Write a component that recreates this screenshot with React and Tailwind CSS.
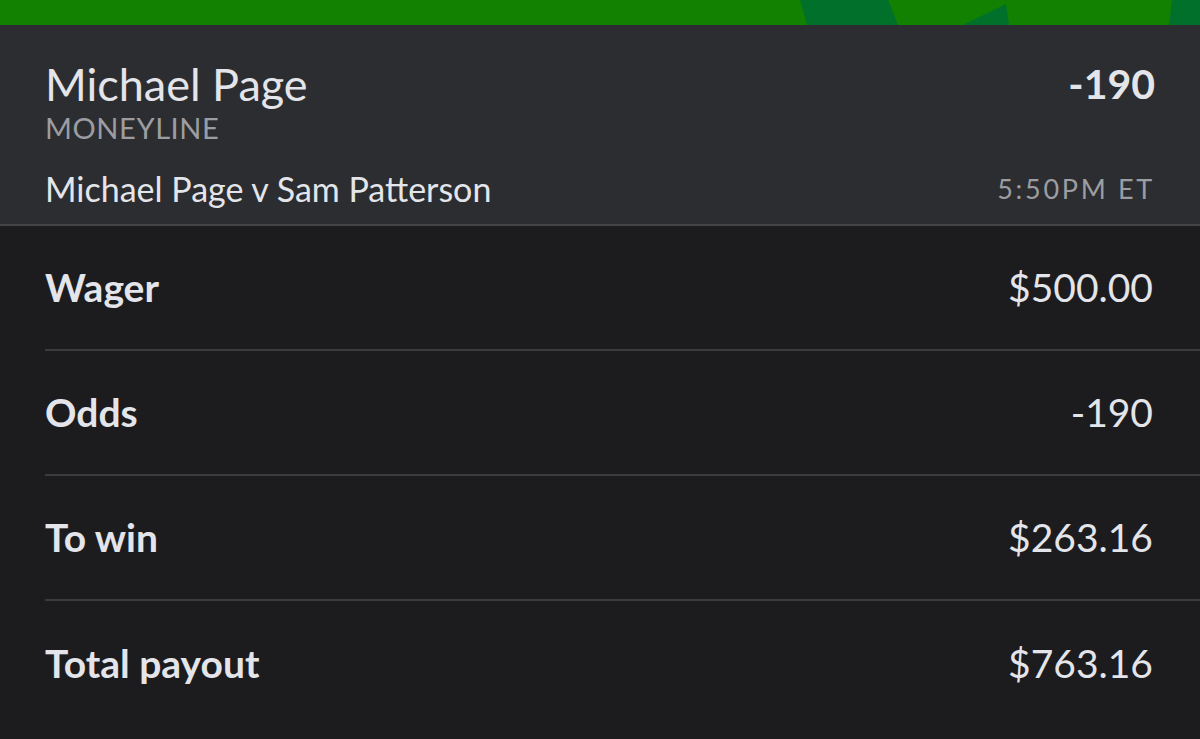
const ROWS = [
  { label: 'Wager', value: '$500.00' },
  { label: 'Odds', value: '-190' },
  { label: 'To win', value: '$263.16' },
  { label: 'Total payout', value: '$763.16' },
]

export default function App() {
  return (
    <div className="w-[1200px] h-[739px] overflow-hidden bg-[#1c1c1e] font-['Lato',sans-serif] text-[#e4e5ea]">
      {/* Green top band */}
      <div className="h-[25px] bg-[#128000]">
        <svg width="1200" height="25" viewBox="0 0 1200 25" className="block">
          <polygon points="800,0 888,0 898,25 807,25" fill="#00702b" />
          <polygon points="963,25 1006,4 1009,25" fill="#00702b" />
          <polygon points="1172,0 1200,0 1200,25 1169,25" fill="#00702b" />
        </svg>
      </div>

      {/* Selection header */}
      <div className="bg-[#2c2d30] border-b-2 border-[#434448] px-[45px] pt-[35px] pb-[15px]">
        <div className="flex justify-between items-start">
          <div>
            <div className="text-[45px] leading-[48px]">Michael Page</div>
            <div className="mt-[4px] text-[29px] leading-[32px] tracking-[0.6px] text-[#9c9da2]">MONEYLINE</div>
          </div>
          <div className="text-[41px] leading-[48px] font-bold">-190</div>
        </div>
        <div className="flex justify-between items-center mt-[25px]">
          <div className="text-[34px] leading-[40px]">Michael Page v Sam Patterson</div>
          <div className="text-[27px] leading-[40px] tracking-[0.1em] text-[#9c9da2]">5:50PM ET</div>
        </div>
      </div>

      {/* Bet summary */}
      <div className="pl-[45px]">
        {ROWS.map((row, i) => (
          <div
            key={row.label}
            className={`flex justify-between items-center h-[125px] pr-[47px] ${i < ROWS.length - 1 ? 'border-b-2 border-[#3a3b3e]' : ''}`}
          >
            <span className="text-[39px] font-bold">{row.label}</span>
            <span className="text-[39px]">{row.value}</span>
          </div>
        ))}
      </div>
    </div>
  )
}
